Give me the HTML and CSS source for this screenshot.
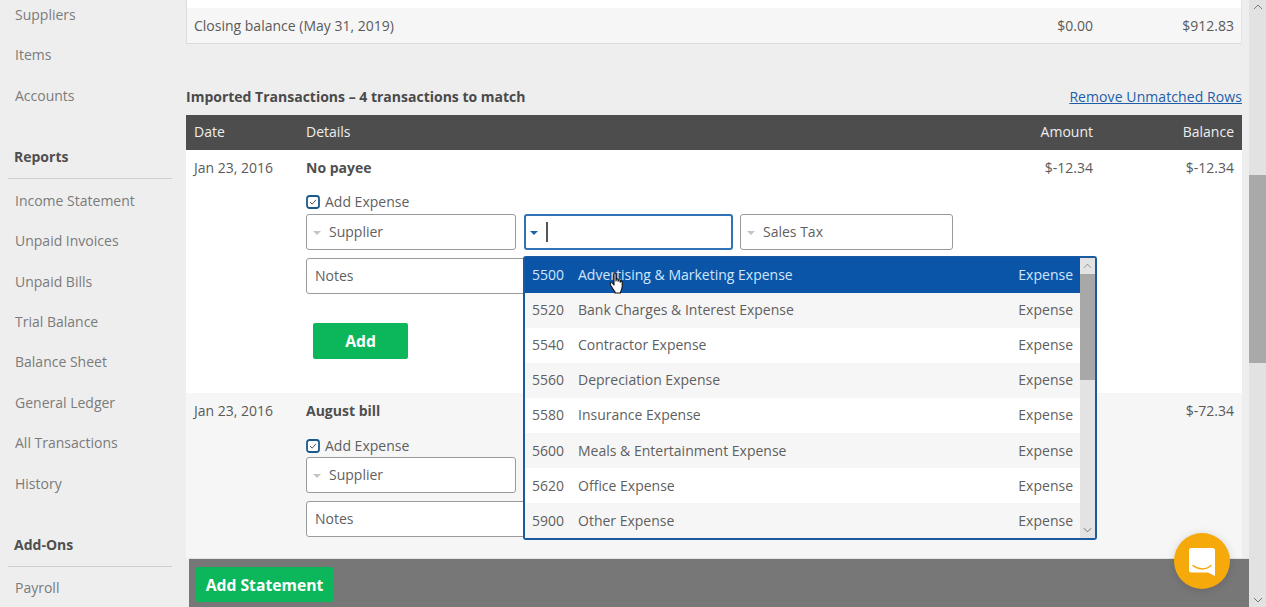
FILE: index.html
```html
<!DOCTYPE html>
<html lang="en">
<head>
<meta charset="utf-8">
<title>Imported Transactions</title>
<link rel="stylesheet" href="styles.css">
</head>
<body>
<div class="app">
  <nav class="sidebar">
    <a class="nav-item">Suppliers</a>
    <a class="nav-item">Items</a>
    <a class="nav-item">Accounts</a>
    <h3 class="nav-head">Reports</h3>
    <a class="nav-item">Income Statement</a>
    <a class="nav-item">Unpaid Invoices</a>
    <a class="nav-item">Unpaid Bills</a>
    <a class="nav-item">Trial Balance</a>
    <a class="nav-item">Balance Sheet</a>
    <a class="nav-item">General Ledger</a>
    <a class="nav-item">All Transactions</a>
    <a class="nav-item">History</a>
    <h3 class="nav-head">Add-Ons</h3>
    <a class="nav-item">Payroll</a>
  </nav>

  <main class="main">
    <section class="summary">
      <div class="summary-row">
        <span class="summary-label">Closing balance (May 31, 2019)</span>
        <span class="col-amount">$0.00</span>
        <span class="col-balance">$912.83</span>
      </div>
    </section>

    <div class="title-row">
      <h2 class="title">Imported Transactions – 4 transactions to match</h2>
      <a class="remove-link">Remove Unmatched Rows</a>
    </div>

    <div class="table-head">
      <span class="col-date">Date</span>
      <span class="col-details">Details</span>
      <span class="col-amount">Amount</span>
      <span class="col-balance">Balance</span>
    </div>

    <div class="txn txn-first">
      <span class="col-date">Jan 23, 2016</span>
      <div class="col-details">
        <div class="payee">No payee</div>
        <label class="check-row">
          <svg class="check" viewBox="0 0 14 14"><rect x="1" y="1" width="12" height="12" rx="2.5" fill="#fff" stroke="#1c5a8c" stroke-width="1.8"/><path d="M4 7l2.200 2.200L10 4.800" fill="none" stroke="#555" stroke-width="1"/></svg>
          Add Expense
        </label>
        <div class="field-row">
          <div class="field field-supplier"><i class="caret"></i>Supplier</div>
          <div class="field field-account focused"><i class="caret caret-blue"></i><i class="text-cursor"></i></div>
          <div class="field field-tax"><i class="caret"></i>Sales Tax</div>
        </div>
        <div class="field field-notes">Notes</div>
        <button class="btn btn-add">Add</button>
      </div>
      <span class="col-amount">$-12.34</span>
      <span class="col-balance">$-12.34</span>
    </div>

    <div class="txn txn-second">
      <span class="col-date">Jan 23, 2016</span>
      <div class="col-details">
        <div class="payee">August bill</div>
        <label class="check-row">
          <svg class="check" viewBox="0 0 14 14"><rect x="1" y="1" width="12" height="12" rx="2.5" fill="#fff" stroke="#1c5a8c" stroke-width="1.8"/><path d="M4 7l2.200 2.200L10 4.800" fill="none" stroke="#555" stroke-width="1"/></svg>
          Add Expense
        </label>
        <div class="field field-supplier"><i class="caret"></i>Supplier</div>
        <div class="field field-notes">Notes</div>
      </div>
      <span class="col-amount"></span>
      <span class="col-balance">$-72.34</span>
    </div>

    <div class="statement-bar">
      <button class="btn btn-statement">Add Statement</button>
    </div>
  </main>

  <div class="page-scroll">
    <svg class="arrow" viewBox="0 0 10 6"><path d="M1 5l4-4 4 4" fill="none" stroke="#777" stroke-width="1"/></svg>
    <div class="page-track"><div class="page-thumb"></div></div>
    <svg class="arrow" viewBox="0 0 10 6"><path d="M1 1l4 4 4-4" fill="none" stroke="#777" stroke-width="1"/></svg>
  </div>
</div>

<div class="dropdown">
  <i class="dropdown-notch"></i>
  <ul class="options">
    <li class="option active"><span class="code">5500</span><span class="name">Advertising &amp; Marketing Expense</span><span class="kind">Expense</span></li>
    <li class="option alt"><span class="code">5520</span><span class="name">Bank Charges &amp; Interest Expense</span><span class="kind">Expense</span></li>
    <li class="option"><span class="code">5540</span><span class="name">Contractor Expense</span><span class="kind">Expense</span></li>
    <li class="option alt"><span class="code">5560</span><span class="name">Depreciation Expense</span><span class="kind">Expense</span></li>
    <li class="option"><span class="code">5580</span><span class="name">Insurance Expense</span><span class="kind">Expense</span></li>
    <li class="option alt"><span class="code">5600</span><span class="name">Meals &amp; Entertainment Expense</span><span class="kind">Expense</span></li>
    <li class="option"><span class="code">5620</span><span class="name">Office Expense</span><span class="kind">Expense</span></li>
    <li class="option alt"><span class="code">5900</span><span class="name">Other Expense</span><span class="kind">Expense</span></li>
  </ul>
  <div class="list-scroll">
    <svg class="mini-arrow" viewBox="0 0 10 6"><path d="M1 5l4-4 4 4" fill="none" stroke="#888" stroke-width="1"/></svg>
    <div class="list-track"><div class="list-thumb"></div></div>
    <svg class="mini-arrow" viewBox="0 0 10 6"><path d="M1 1l4 4 4-4" fill="none" stroke="#666" stroke-width="1"/></svg>
  </div>
</div>

<svg class="hand" viewBox="0 0 16 22">
  <path d="M5 1.800c0-1.200 2-1.200 2 0V9l.3-1.600c.3-1 1.800-.8 1.800.3V9.300l.3-1c.3-1 1.800-.7 1.800.4v1.500l.3-.6c.4-.9 1.700-.5 1.700.5v4.400c0 2.500-1.200 4.500-1.700 5.500v1H6v-1.200C4.500 18 3.600 16.500 1.800 13.500c-.9-1.500-.9-2.600 0-2.900.7-.3 1.400.2 3.200 2.400z" fill="#fff" stroke="#111" stroke-width="1.100" stroke-linejoin="round"/>
</svg>

<button class="chat" aria-label="Chat">
  <svg viewBox="0 0 28 28" class="chat-icon">
    <path d="M3.500 1h21A2.500 2.500 0 0 1 27 3.500V29l-7-3.500H3.500A2.500 2.500 0 0 1 1 23v-19.500A2.500 2.500 0 0 1 3.500 1z" fill="#fff"/>
    <path d="M5 18.500c5.500 4.500 13 4.500 18 0" fill="none" stroke="#f5a90a" stroke-width="1.500" stroke-linecap="round"/>
  </svg>
</button>
</body>
</html>
```
FILE: styles.css
```css
* { box-sizing: border-box; }
html, body { margin: 0; height: 607px; overflow: hidden; }
body {
  position: relative;
  background: #eeeeee;
  color: #5a5a5a;
  font: 14px/20px "Open Sans", "Liberation Sans", sans-serif;
}
.app { display: flex; height: 607px; }

/* Sidebar */
.sidebar {
  width: 186px;
  flex: none;
  padding: 5px 14px 0 8px;
  display: flex;
  flex-direction: column;
}
.nav-item {
  display: block;
  flex: none;
  height: 40.4px;
  padding-left: 7px;
  color: #7b7b7b;
  white-space: nowrap;
}
.nav-head {
  flex: none;
  margin: 11px 0 11.6px;
  padding: 10px 0 11px 6px;
  border-bottom: 1px solid #cfcfcf;
  font-size: 14px;
  line-height: 20px;
  font-weight: 700;
  color: #4f4f4f;
}

/* Main column */
.main {
  position: relative;
  width: 1063px;
  flex: none;
  padding-right: 7px;
  overflow: hidden;
}
.summary {
  background: #fff;
  padding-top: 8px;
  border-left: 1px solid #dcdcdc;
  border-right: 1px solid #e4e4e4;
}
.summary-row {
  height: 36px;
  display: flex;
  align-items: center;
  padding: 0 7px;
  background: #f6f6f6;
  border-bottom: 1px solid #dadada;
}
.summary-label { flex: 1; }
.title-row {
  display: flex;
  justify-content: space-between;
  align-items: center;
  height: 20px;
  margin-top: 43px;
  margin-bottom: 8px;
}
.title { margin: 0; font-size: 14px; font-weight: 700; color: #4a4a4a; }
.remove-link { color: #1e5ea8; text-decoration: underline; letter-spacing: .006em; }
.table-head {
  height: 35px;
  display: flex;
  align-items: center;
  padding: 0 8px 1px;
  background: #4d4d4d;
  color: #eeeeee;
}
.col-date { width: 112px; flex: none; white-space: nowrap; }
.col-details { flex: 1; min-width: 0; }
.col-amount { width: 100px; flex: none; text-align: right; white-space: nowrap; }
.col-balance { width: 141px; flex: none; text-align: right; white-space: nowrap; }

/* Transactions */
.txn { display: flex; padding: 8px 8px 0; }
.txn-first { background: #fff; height: 243px; }
.txn-second { background: #f6f6f6; height: 165px; }
.payee { font-weight: 700; color: #4f4f4f; }
.check-row {
  display: flex;
  align-items: center;
  gap: 5px;
  height: 20px;
  margin-top: 14px;
  color: #5f5f5f;
}
.check { width: 14px; height: 14px; flex: none; }
.field-row { display: flex; gap: 8px; margin-top: 2px; }
.txn-second .check-row { margin-top: 15px; }
.txn-second .field-supplier { margin-top: 1px; }
.field {
  display: flex;
  align-items: center;
  height: 36px;
  padding-left: 6px;
  background: #fff;
  border: 1px solid #9a9a9a;
  border-radius: 3px;
  color: #5f5f5f;
}
.field-supplier { width: 210px; }
.field-account { width: 209px; }
.field-tax { width: 213px; margin-left: -1px; }
.field-notes { width: 230px; margin-top: 8px; padding-left: 8px; }
.focused { border: 2px solid #2f72b5; padding-left: 4px; }
.caret {
  width: 0;
  height: 0;
  margin-right: 8px;
  margin-top: 2px;
  border-left: 4px solid transparent;
  border-right: 4px solid transparent;
  border-top: 4px solid #c4c4c4;
}
.caret-blue { border-top-color: #1c62ad; }
.text-cursor { width: 2px; height: 20px; background: #555; }
.btn {
  border: 0;
  border-radius: 2px;
  background: #0cb75b;
  color: #fff;
  font: 700 15.7px/20px "Open Sans", "Liberation Sans", sans-serif;
}
.btn-add { display: block; width: 95px; height: 36px; margin: 29px 0 0 7px; }

/* Overlays */
.statement-bar {
  position: absolute;
  left: 3px;
  right: 0;
  top: 558px;
  height: 49px;
  padding: 8px 7px;
  background: #777777;
  border-top: 1px solid #e2e2e2;
}
.btn-statement { width: 137px; height: 35px; }

.dropdown {
  position: absolute;
  left: 523px;
  top: 256px;
  width: 574px;
  height: 284px;
  display: flex;
  background: #f6f6f6;
  border: 2px solid #1a5a9e;
  border-radius: 3px;
}
.dropdown-notch {
  position: absolute;
  left: 5px;
  top: -7px;
  width: 0;
  height: 0;
  border-left: 5px solid transparent;
  border-right: 5px solid transparent;
  border-bottom: 5px solid #fff;
}
.options { flex: 1; min-width: 0; margin: -1px 0 0; padding: 0; list-style: none; }
.option {
  height: 35.1px;
  display: flex;
  align-items: center;
  padding: 0 7px;
  color: #5f5f5f;
  background: #fff;
}
.option.alt { background: #f6f6f6; }
.option.active { background: #0b55a8; color: #cfe6ff; height: 35.6px; }
.code { width: 46px; flex: none; }
.name { flex: 1; }
.list-scroll {
  width: 15px;
  flex: none;
  display: flex;
  flex-direction: column;
  background: #e3e3e3;
}
.mini-arrow { width: 9px; height: 6px; margin: 5px auto; flex: none; }
.list-track { flex: 1; }
.list-thumb { height: 106px; background: #a8a8a8; }

.page-scroll {
  width: 17px;
  flex: none;
  display: flex;
  flex-direction: column;
  background: #e2e2e2;
}
.arrow { width: 10px; height: 6px; margin: 4px auto; flex: none; }
.page-track { flex: 1; padding-top: 161px; }
.page-thumb { height: 188px; background: #a9a9a9; }

.hand { position: absolute; left: 609px; top: 272px; width: 16px; height: 22px; }
.chat {
  position: absolute;
  left: 1174px;
  top: 533px;
  width: 56px;
  height: 56px;
  padding: 0;
  border: 0;
  border-radius: 50%;
  background: #f5a90a;
  box-shadow: 0 1px 8px rgba(0,0,0,.15);
  display: flex;
  align-items: center;
  justify-content: center;
}
.chat-icon { width: 28px; height: 28px; overflow: visible; }
```
